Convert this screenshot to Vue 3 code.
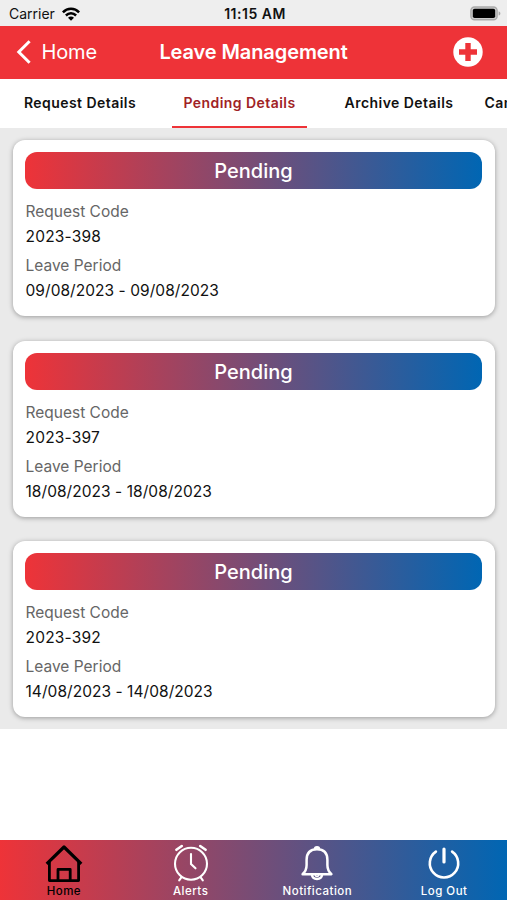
<template>
  <div class="screen">
    <div class="status-bar">
      <div class="carrier">
        <span>Carrier</span>
        <svg class="wifi" width="18" height="14" viewBox="0 0 18 14">
          <g fill="none" stroke="#000" stroke-width="2.5">
            <path d="M0.9 5.3 C5.4 0.6 12.6 0.6 17.1 5.3" />
            <path d="M3.9 8.5 C6.8 5.6 11.2 5.6 14.1 8.5" />
          </g>
          <path d="M6 10.7 C7.7 9.1 10.3 9.1 12 10.7 L9 13.8 Z" />
        </svg>
      </div>
      <span class="time">11:15 AM</span>
      <svg class="battery" width="31" height="15" viewBox="0 0 31 15">
        <rect x="0.9" y="1" width="26.2" height="12.8" rx="3.6" fill="#ccc" stroke="#aaa" stroke-width="1.4" />
        <rect x="2.8" y="2.8" width="22.4" height="9.2" rx="1.8" />
        <path d="M28.6 5.2 C31 6 31 8.8 28.6 9.6 Z" fill="#aaa" />
      </svg>
    </div>

    <header class="header">
      <button class="back">
        <svg width="16" height="26" viewBox="0 0 16 26">
          <path d="M13.6 2.2 L2.8 13 L13.6 23.8" fill="none" stroke="#fff" stroke-width="3" />
        </svg>
        <span>Home</span>
      </button>
      <h1 class="title">Leave Management</h1>
      <button class="add" aria-label="Add">
        <svg width="30" height="30" viewBox="0 0 30 30">
          <circle cx="15" cy="15" r="14.7" fill="#fff" />
          <path d="M15 6 V24 M6 15 H24" stroke="#ee3338" stroke-width="5.4" />
        </svg>
      </button>
    </header>

    <nav class="tabs">
      <div
        v-for="tab in tabs"
        :key="tab"
        class="tab"
        :class="{ active: tab === activeTab }"
        @click="activeTab = tab"
      >
        <span>{{ tab }}</span>
      </div>
    </nav>

    <main class="list">
      <section v-for="item in requests" :key="item.code" class="card">
        <div class="badge">Pending</div>
        <p class="label">Request Code</p>
        <p class="value code">{{ item.code }}</p>
        <p class="label">Leave Period</p>
        <p class="value">{{ item.from }} - {{ item.to }}</p>
      </section>
    </main>

    <footer class="bottom-bar">
      <div class="nav-item current">
        <svg width="40" height="40" viewBox="0 0 40 40">
          <g fill="none" stroke="#000" stroke-width="2.8" stroke-linejoin="round">
            <path d="M2.7 20.8 L20 4 L37.3 20.8" stroke-width="3.2" />
            <path d="M5.4 19 V37.6 H34.6 V19" />
            <path d="M14 37 V26.4 H26.2 V37" />
          </g>
        </svg>
        <span>Home</span>
      </div>
      <div class="nav-item">
        <svg width="40" height="40" viewBox="0 0 40 40">
          <g fill="none" stroke="#fff" stroke-width="2.1" stroke-linecap="round">
            <circle cx="20" cy="20.8" r="16" />
            <path d="M20 11 V21 L24.5 25.3" />
            <path d="M5.4 6.8 L10.8 3 M29.2 3 L34.6 6.8" stroke-width="2.6" />
            <path d="M10.5 34.2 L8.2 37.4 M29.5 34.2 L31.8 37.4" />
          </g>
        </svg>
        <span>Alerts</span>
      </div>
      <div class="nav-item">
        <svg width="40" height="40" viewBox="0 0 40 40">
          <g fill="none" stroke="#fff" stroke-width="2.5" stroke-linejoin="round">
            <path d="M5.6 31.2 C8.6 28.5 9.6 26 9.6 22 V17 C9.6 10 13.4 6.2 20 6.2 C26.6 6.2 30.4 10 30.4 17 V22 C30.4 26 31.4 28.5 34.4 31.2 Z" />
            <path d="M18 6 C18 3.8 22 3.8 22 6" />
            <path d="M15 32 C15.5 37.2 24.5 37.2 25 32" />
            <path d="M18.2 32 C18.6 34 21.4 34 21.8 32" stroke-width="1.6" />
          </g>
        </svg>
        <span>Notification</span>
      </div>
      <div class="nav-item">
        <svg width="40" height="40" viewBox="0 0 40 40">
          <g fill="none" stroke="#fff" stroke-width="2.6" stroke-linecap="round">
            <path d="M11.9 8.6 A14.2 14.2 0 1 0 28.1 8.6" />
            <path d="M20 6 V19" stroke-width="3.2" />
          </g>
        </svg>
        <span>Log Out</span>
      </div>
    </footer>
  </div>
</template>

<script setup>
import { ref } from 'vue'

const tabs = ['Request Details', 'Pending Details', 'Archive Details', 'Cancelled Details']
const activeTab = ref('Pending Details')

const requests = [
  { code: '2023-398', from: '09/08/2023', to: '09/08/2023' },
  { code: '2023-397', from: '18/08/2023', to: '18/08/2023' },
  { code: '2023-392', from: '14/08/2023', to: '14/08/2023' },
]
</script>

<style>
body {
  margin: 0;
  background: #fff;
}
</style>

<style scoped>
.screen {
  display: flex;
  flex-direction: column;
  width: 100%;
  height: 900px;
  overflow: hidden;
  background: #fff;
  font-family: Inter, 'Liberation Sans', sans-serif;
  color: #111;
}

svg {
  display: block;
  flex: none;
}

.status-bar {
  display: grid;
  grid-template-columns: 1fr auto 1fr;
  align-items: center;
  flex: none;
  box-sizing: border-box;
  height: 25.5px;
  padding: 2px 6px 0 9px;
  background: #eee;
  font-size: 14px;
  line-height: 20px;
}

.carrier {
  display: flex;
  align-items: center;
  gap: 7px;
}

.time {
  font-weight: 600;
  letter-spacing: 0.5px;
}

.battery {
  justify-self: end;
}

.header {
  display: grid;
  grid-template-columns: 1fr auto 1fr;
  align-items: center;
  flex: none;
  box-sizing: border-box;
  height: 53.7px;
  padding: 0 16px;
  background: #ee3338;
  color: #fff;
}

button {
  padding: 0;
  border: 0;
  background: none;
  color: inherit;
  font: inherit;
}

.back {
  display: flex;
  align-items: center;
  gap: 9.5px;
  font-size: 20px;
  letter-spacing: -0.15px;
}

.title {
  margin: 0;
  font-size: 20px;
  font-weight: 600;
  letter-spacing: -0.1px;
}

.add {
  justify-self: end;
  margin-right: 8px;
}

.tabs {
  display: flex;
  flex: none;
  height: 49px;
  overflow: hidden;
  background: #fff;
}

.tab {
  display: flex;
  flex: none;
  align-items: center;
  justify-content: center;
  box-sizing: border-box;
  width: 135px;
  margin-right: 24.5px;
  border-bottom: 2px solid transparent;
  font-size: 14px;
  font-weight: 600;
  letter-spacing: 0.45px;
  white-space: nowrap;
}

.tab:first-child {
  margin-left: 12.5px;
}

.tab:last-child {
  justify-content: flex-start;
  margin-left: -6.5px;
}

.tab.active {
  border-color: #ee3338;
  color: #a02225;
}

.list {
  display: flex;
  flex: none;
  flex-direction: column;
  gap: 24.1px;
  padding: 12px 0;
  background: #eaeaea;
}

.card {
  box-sizing: border-box;
  height: 176.3px;
  margin: 0 12.5px;
  padding: 12.3px 12.5px;
  border-radius: 12px;
  background: #fff;
  box-shadow: 0 1px 5px rgba(0, 0, 0, 0.35);
}

.badge {
  height: 36.7px;
  margin-bottom: 9px;
  border-radius: 12px;
  background: linear-gradient(90deg, #ee3338, #0066b3);
  color: #fff;
  font-size: 20px;
  font-weight: 500;
  line-height: 39px;
  text-align: center;
}

.label,
.value {
  margin: 0;
  padding-left: 0.5px;
  font-size: 15.5px;
}

.label {
  line-height: 27px;
  color: #666;
}

.value {
  margin-bottom: 3px;
  line-height: 24px;
  letter-spacing: 0.05px;
}

.code {
  letter-spacing: 0.2px;
}

.bottom-bar {
  display: flex;
  flex: none;
  height: 60px;
  margin-top: auto;
  background: linear-gradient(90deg, #ee3338, #0066b3);
  color: #fff;
}

.nav-item {
  display: flex;
  flex: 1;
  flex-direction: column;
  align-items: center;
  padding: 3px 0 0 1px;
  font-size: 11.5px;
  font-weight: 500;
  line-height: 16px;
  letter-spacing: 0.5px;
}

.nav-item.current {
  color: #000;
}
</style>
